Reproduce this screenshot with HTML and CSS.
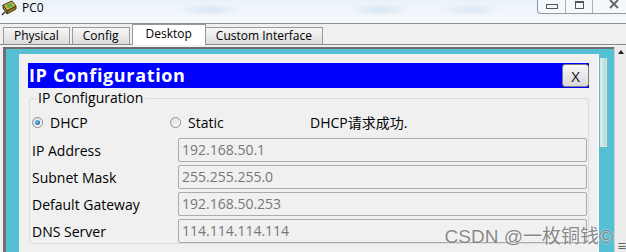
FILE: index.html
```html
<!DOCTYPE html>
<html lang="en">
<head>
    <meta charset="UTF-8">
    <title>PC0</title>
    <link rel="stylesheet" href="styles.css">
</head>
<body>
    <div class="window">
        <div class="titlebar">
            <svg class="app-icon" width="17" height="17" viewBox="0 0 17 17">
                <path d="M2 5 L11 1 L15 6 L6 11 Z" fill="#c8b04a" stroke="#4a3d10" stroke-width="1"/>
                <path d="M6 11 L15 6 L15 9 L6 14 Z" fill="#8d7a2a" stroke="#4a3d10" stroke-width="1"/>
                <path d="M2 5 L6 11 L6 14 L2 8 Z" fill="#a38d33" stroke="#4a3d10" stroke-width="1"/>
                <path d="M5 5 L10 3 L12 6 L7 8 Z" fill="#5bb04a"/>
                <path d="M1 15 L4 12" stroke="#333" stroke-width="1.5"/>
            </svg>
            <span class="app-name">PC0</span>
            <div class="controls">
                <span class="ctl ctl-min"><i></i></span>
                <span class="ctl ctl-max"><i></i></span>
                <span class="ctl ctl-close">
                    <svg width="10" height="9" viewBox="0 0 10 9">
                        <path d="M1 0 L9 8 M9 0 L1 8" stroke="#6a6a6a" stroke-width="2"/>
                    </svg>
                </span>
            </div>
        </div>

        <div class="tabs">
            <div class="tab">Physical</div>
            <div class="tab">Config</div>
            <div class="tab active">Desktop</div>
            <div class="tab">Custom Interface</div>
        </div>

        <div class="pane">
            <div class="desk">
                <div class="app">
                    <div class="app-head">
                        <span class="app-title">IP Configuration</span>
                        <button class="close-btn">X</button>
                    </div>
                    <fieldset class="group">
                        <legend>IP Configuration</legend>
                        <div class="mode-row">
                            <label class="radio radio-dhcp"><span class="dot on"></span>DHCP</label>
                            <label class="radio radio-static"><span class="dot"></span>Static</label>
                            <span class="status">DHCP请求成功.</span>
                        </div>
                        <div class="field">
                            <span class="field-label">IP Address</span>
                            <div class="input">192.168.50.1</div>
                        </div>
                        <div class="field">
                            <span class="field-label">Subnet Mask</span>
                            <div class="input">255.255.255.0</div>
                        </div>
                        <div class="field">
                            <span class="field-label">Default Gateway</span>
                            <div class="input">192.168.50.253</div>
                        </div>
                        <div class="field">
                            <span class="field-label">DNS Server</span>
                            <div class="input">114.114.114.114</div>
                        </div>
                    </fieldset>
                </div>
                <div class="side">
                    <div class="side-win"></div>
                </div>
            </div>
            <div class="scrollbar">
                <span class="arrow-up"></span>
                <span class="grip">&#8801;</span>
            </div>
        </div>

        <div class="watermark">CSDN @一枚铜钱©</div>
    </div>
</body>
</html>
```

FILE: styles.css
```css
body {
    margin: 0;
    font-family: "Open Sans", "Noto Sans CJK SC", sans-serif;
    background-color: #f0f0f0;
    color: #000;
}

.window {
    position: relative;
    width: 626px;
    height: 252px;
    overflow: hidden;
}

/* window title */
.titlebar {
    height: 23px;
    display: flex;
    align-items: flex-start;
    border-bottom: 1px solid #8e8e8e;
    background:
        radial-gradient(ellipse 30px 6px at 210px 10px, rgba(170, 200, 230, 0.35), transparent),
        radial-gradient(ellipse 30px 6px at 380px 10px, rgba(170, 200, 230, 0.35), transparent),
        radial-gradient(ellipse 30px 6px at 470px 10px, rgba(170, 200, 230, 0.3), transparent),
        linear-gradient(#eaf2f9, #f5f8fb);
}

.app-icon {
    margin: 0 4px 0 1px;
}

.app-name {
    font-size: 12px;
    line-height: 16px;
}

.controls {
    margin-left: auto;
    display: flex;
    height: 13px;
    border: 1px solid #8f9aa6;
    border-top: none;
    border-right: none;
    border-radius: 0 0 0 4px;
    background: rgba(255, 255, 255, 0.4);
}

.ctl {
    display: flex;
    justify-content: center;
    border-left: 1px solid #a8b2bc;
}

.ctl:first-child {
    border-left: none;
}

.ctl-min {
    width: 27px;
}

.ctl-min i {
    width: 10px;
    height: 3px;
    margin-top: 4px;
    border: 1px solid #555;
}

.ctl-max {
    width: 26px;
}

.ctl-max i {
    width: 7px;
    height: 5px;
    margin-top: 1px;
    border: 1px solid #555;
    border-top-width: 2px;
}

.ctl-close {
    width: 34px;
    padding-left: 8px;
    box-sizing: border-box;
}

/* tab strip */
.tabs {
    height: 20px;
    display: flex;
    align-items: flex-end;
    padding-left: 3px;
    border-bottom: 1px solid #8a8a8a;
}

.tab {
    height: 16px;
    padding: 0 10px;
    margin-right: 2px;
    font-size: 12px;
    line-height: 16px;
    border: 1px solid #9a9a9a;
    border-bottom: none;
    background: linear-gradient(#f7f7f7, #dcdcdc);
}

.tab.active {
    height: 20px;
    padding: 0 13px;
    margin: 0 -1px -1px 0;
    line-height: 18px;
    background: #fff;
}

/* desktop area */
.pane {
    margin-top: 2px;
    display: flex;
}

.desk {
    flex: 1;
    display: flex;
    height: 200px;
    margin-left: 3px;
    padding: 5px 0 0 13px;
    border-top: 2px solid #6f6f6f;
    border-left: 3px solid #6f6f6f;
    background-color: #55bfd4;
}

.app {
    width: 561px;
    padding: 9px 9px 0 9px;
    background-color: #f0f0f0;
    border-right: 1px solid #fafafa;
}

.app-head {
    height: 25px;
    display: flex;
    align-items: center;
    justify-content: space-between;
    background-color: #0000ff;
}

.app-title {
    padding-left: 1px;
    color: #fff;
    font-weight: bold;
    font-size: 18px;
    letter-spacing: 0.65px;
    line-height: 25px;
}

.close-btn {
    width: 27px;
    height: 23px;
    padding: 0;
    margin-right: 0;
    font-family: "Open Sans", sans-serif;
    font-size: 15px;
    color: #111;
    border: 1px solid #7b7b7b;
    border-radius: 3px;
    background: linear-gradient(#f8f8f8, #d8d8d8);
}

.group {
    margin: 2px 0 0 1px;
    padding: 0 1px 0 2px;
    border: 1px solid #d6dde3;
    border-radius: 3px;
}

.group legend {
    margin-left: 4px;
    padding: 0 2px;
    font-size: 14px;
    line-height: 16px;
}

.mode-row {
    display: flex;
    align-items: center;
    height: 20px;
    margin-top: 6px;
    font-size: 14px;
}

.radio {
    display: flex;
    align-items: center;
}

.radio-dhcp {
    width: 138px;
}

.radio-static {
    width: 140px;
}

.dot {
    box-sizing: border-box;
    width: 11px;
    height: 11px;
    margin-right: 7px;
    border: 1px solid #8e8f8f;
    border-radius: 50%;
    background: linear-gradient(135deg, #dcdcdc, #ffffff);
    display: flex;
    align-items: center;
    justify-content: center;
}

.dot.on::after {
    content: "";
    width: 5px;
    height: 5px;
    border-radius: 50%;
    background: radial-gradient(circle at 35% 35%, #6cc0ea, #0f5a8f);
}

.field {
    display: flex;
    align-items: center;
    height: 24px;
    margin-top: 3px;
    font-size: 14px;
}

.mode-row + .field {
    margin-top: 6px;
}

.field-label {
    width: 146px;
}

.input {
    flex: 1;
    height: 22px;
    padding-left: 3px;
    line-height: 22px;
    color: #777;
    border: 1px solid #ababab;
    border-radius: 2px;
    background-color: #f0f0f0;
}

/* strip of desktop to the right of the app window */
.side {
    flex: 1;
    padding: 4px 0 0 1px;
}

.side-win {
    width: 5px;
    height: 88px;
    border: 1px solid #efe3c4;
    border-top: none;
    background: linear-gradient(90deg, #d8eef3, #a9dce7);
}

.scrollbar {
    width: 11px;
    height: 205px;
    position: relative;
    border-left: 1px solid #d0d0d0;
    background-color: #ececec;
}

.arrow-up {
    position: absolute;
    top: 3px;
    left: 3px;
    border: 3px solid transparent;
    border-bottom: 4px solid #222;
    border-top: none;
}

.grip {
    position: absolute;
    bottom: 2px;
    left: 2px;
    font-size: 10px;
    line-height: 8px;
    color: #444;
}

.watermark {
    position: absolute;
    right: 13px;
    top: 221px;
    font-family: "Liberation Sans", "Noto Sans CJK SC", sans-serif;
    font-size: 19px;
    color: rgba(105, 105, 105, 0.8);
    text-shadow: 0 0 2px #fff;
}
```
